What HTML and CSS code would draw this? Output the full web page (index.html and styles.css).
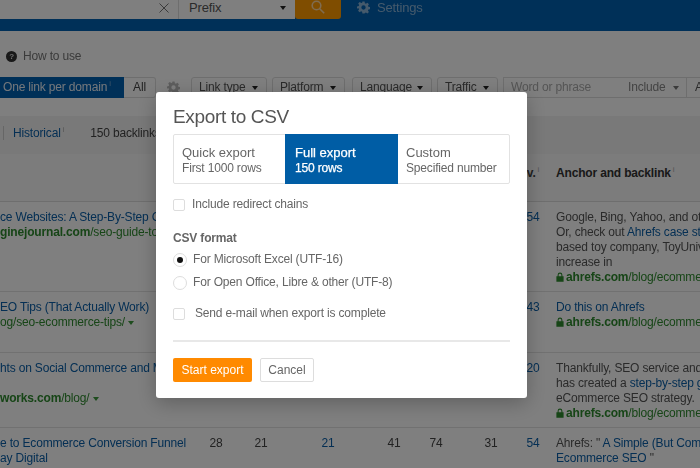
FILE: index.html
```html
<!DOCTYPE html>
<html lang="en">
<head>
<meta charset="utf-8">
<title>Export to CSV</title>
<link rel="stylesheet" href="styles.css">
</head>
<body>
<svg class="defs" width="0" height="0" aria-hidden="true">
  <defs>
    <symbol id="gear" viewBox="0 0 24 24"><path fill-rule="evenodd" d="M10 1h4l.6 3.200 1.900.8 2.700-1.800 2.800 2.800-1.800 2.700.8 1.900 3.200.6v4l-3.200.6-.8 1.900 1.800 2.700-2.800 2.800-2.700-1.800-1.900.8L14 23h-4l-.6-3.200-1.900-.8-2.700 1.800-2.800-2.800 1.800-2.700-.8-1.900L0 14v-4l3.200-.6.8-1.900L2.200 4.800 5 2l2.700 1.800 1.900-.8zM12 8a4 4 0 1 0 0 8 4 4 0 0 0 0-8z"/></symbol>
    <symbol id="lock" viewBox="0 0 10 12"><path fill-rule="evenodd" d="M2 5V3.500a3 3 0 0 1 6 0V5h1.500v7H.5V5zm1.300 0h3.400V3.500a1.700 1.700 0 0 0-3.400 0z"/></symbol>
  </defs>
</svg>

<div class="page">
  <header class="topbar">
    <div class="search">
      <div class="search-input"><svg class="x" viewBox="0 0 10 10"><path d="M.5.5l9 9M9.500.5l-9 9"/></svg></div>
      <div class="search-mode"><span>Prefix</span><i class="caret"></i></div>
      <div class="search-btn"><svg class="glass" viewBox="0 0 14 14"><circle cx="5.500" cy="5.500" r="4.300"/><path d="M8.700 8.700l4.500 4.500"/></svg></div>
    </div>
    <div class="settings"><svg class="gear"><use href="#gear"/></svg><span>Settings</span></div>
  </header>

  <div class="howto"><span class="q">?</span><span>How to use</span></div>

  <div class="filters">
    <div class="seg"><span class="seg-on">One link per domain<sup>i</sup></span><span class="seg-off">All</span></div>
    <svg class="gear filter-gear"><use href="#gear"/></svg>
    <div class="drop w-link">Link type<i class="caret"></i></div>
    <div class="drop w-plat">Platform<i class="caret"></i></div>
    <div class="drop w-lang">Language<i class="caret"></i></div>
    <div class="drop w-traf">Traffic<i class="caret"></i></div>
    <div class="word"><span class="ph">Word or phrase</span><span class="inc">Include<i class="caret pale"></i></span><span class="last">A</span></div>
  </div>

  <div class="tabs">
    <span class="tick"></span>
    <a class="hist">Historical<sup>i</sup></a>
    <span class="count">150 backlinks</span>
  </div>

  <div class="row head">
    <div></div><div></div><div></div><div></div><div></div><div></div><div></div>
    <div class="num">v.<sup>i</sup></div>
    <div class="anchor-h">Anchor and backlink<sup>i</sup></div>
  </div>

  <div class="row">
    <div class="ref"><a>ce Websites: A Step-By-Step G</a><br><span class="url"><b>ginejournal.com</b>/seo-guide-to-</span></div>
    <div></div><div></div><div></div><div></div><div></div><div></div>
    <div class="num link">54</div>
    <div class="anchor">Google, Bing, Yahoo, and other<br>Or, check out <a>Ahrefs case study</a><br>based toy company, ToyUniverse<br>increase in<br><span class="url"><svg class="lock"><use href="#lock"/></svg><b>ahrefs.com</b>/blog/ecommerce</span></div>
  </div>

  <div class="row r2">
    <div class="ref"><a>EO Tips (That Actually Work)</a><br><span class="url">og/seo-ecommerce-tips/<i class="caret green"></i></span></div>
    <div></div><div></div><div></div><div></div><div></div><div></div>
    <div class="num link">43</div>
    <div class="anchor"><a>Do this on Ahrefs</a><br><span class="url"><svg class="lock"><use href="#lock"/></svg><b>ahrefs.com</b>/blog/ecommerce</span></div>
  </div>

  <div class="row">
    <div class="ref"><a>hts on Social Commerce and M</a><br><br><span class="url"><b>works.com</b>/blog/<i class="caret green"></i></span></div>
    <div></div><div></div><div></div><div></div><div></div><div></div>
    <div class="num link">20</div>
    <div class="anchor">Thankfully, SEO service and<br>has created a <a>step-by-step guide</a><br>eCommerce SEO strategy.<br><span class="url"><svg class="lock"><use href="#lock"/></svg><b>ahrefs.com</b>/blog/ecommerce</span></div>
  </div>

  <div class="row">
    <div class="ref"><a>e to Ecommerce Conversion Funnel</a><br><a>ay Digital</a><br><span class="url">/2019/03/01/how-to-map</span></div>
    <div class="num">28</div><div class="num">21</div><div class="num link">21</div><div class="num">41</div><div class="num">74</div><div class="num">31</div>
    <div class="num link">54</div>
    <div class="anchor">Ahrefs: " <a>A Simple (But Complete</a><br><a>Ecommerce SEO</a> "<br><span class="url"><svg class="lock"><use href="#lock"/></svg><b>ahrefs.com</b>/blog/</span></div>
  </div>
</div>

<div class="scrim">
  <div class="modal">
    <h1>Export to CSV</h1>
    <div class="choice">
      <div class="opt"><strong>Quick export</strong><span>First 1000 rows</span></div>
      <div class="opt on"><strong>Full export</strong><span>150 rows</span></div>
      <div class="opt"><strong>Custom</strong><span>Specified number</span></div>
    </div>
    <label class="check first"><i class="box"></i><span>Include redirect chains</span></label>
    <h2>CSV format</h2>
    <label class="radio"><i class="dot on"></i><span>For Microsoft Excel (UTF-16)</span></label>
    <label class="radio"><i class="dot"></i><span>For Open Office, Libre &amp; other (UTF-8)</span></label>
    <label class="check mail"><i class="box"></i><span>Send e-mail when export is complete</span></label>
    <hr>
    <div class="actions"><button class="start">Start export</button><button class="cancel">Cancel</button></div>
  </div>
</div>
</body>
</html>
```

FILE: styles.css
```css
* { box-sizing: border-box; }
html, body { margin: 0; height: 100%; overflow: hidden; }
body { font: 12px/15px "Liberation Sans", Arial, sans-serif; letter-spacing: -.17px; color: #333; background: #fff; width: 700px; height: 468px; position: relative; filter: blur(0.35px); }
.defs { position: absolute; }
.page { width: 700px; height: 468px; overflow: hidden; }

.caret { display: inline-block; flex: none; width: 0; height: 0; border-left: 3.5px solid transparent; border-right: 3.5px solid transparent; border-top: 4px solid #222; }
.caret.pale { border-top-color: #777; }
.caret.green { border-top-color: #3c9a3c; margin-left: 3px; vertical-align: 1px; }
sup { font-size: 8px; line-height: 0; color: #aaa; font-weight: 400; margin-left: 2px; vertical-align: 5px; }

.topbar { height: 31px; background: #0060b0; display: flex; align-items: flex-start; }
.search { display: flex; height: 19px; }
.search-input { width: 179px; background: #fff; border-right: 1px solid #ddd; display: flex; justify-content: flex-end; align-items: flex-start; padding: 3px 9px 0 0; }
.x { width: 10px; height: 10px; fill: none; stroke: #777; stroke-width: 1; }
.search-mode { width: 116px; background: #fff; display: flex; align-items: flex-start; justify-content: space-between; padding: 0 9px 0 10px; color: #555; font-size: 13px; line-height: 15px; }
.search-mode .caret { margin-top: 6px; }
.search-btn { width: 46px; background: #ff9a00; border-radius: 0 0 3px 3px; display: flex; justify-content: center; align-items: flex-start; }
.glass { width: 14px; height: 14px; fill: none; stroke: #ffd9a0; stroke-width: 1.6; }
.settings { display: flex; align-items: center; gap: 7px; margin-left: 16px; color: #8ab4d8; font-size: 13px; height: 14px; }
.gear { width: 13px; height: 13px; fill: #8ab4d8; display: block; }

.howto { display: flex; align-items: center; gap: 6px; height: 16px; margin: 17px 0 0 6px; color: #777; }
.q { width: 11px; height: 11px; border-radius: 50%; background: #333; color: #ddd; font: bold 8px/11px "Liberation Sans", sans-serif; text-align: center; }

.filters { display: flex; align-items: stretch; height: 21px; margin-top: 13px; }
.seg { display: flex; flex: none; width: 156px; }
.seg-on { width: 124px; background: #0060b0; color: #e6eef6; padding: 3px 0 0 3px; white-space: nowrap; }
.seg-on sup { color: #7aa9cf; }
.seg-off { width: 32px; border: 1px solid #ddd; border-left: 0; border-radius: 0 3px 3px 0; text-align: center; padding-top: 2px; color: #444; }
.filter-gear { width: 13px; height: 13px; fill: #bbb; margin: 4px 11px 0 11px; flex: none; }
.drop { display: flex; flex: none; justify-content: space-between; align-items: center; border: 1px solid #ddd; border-radius: 3px; padding: 0 8px 0 7px; color: #555; margin-right: 5px; }
.w-link { width: 76px; }
.w-plat { width: 73px; margin-right: 7px; }
.w-lang { width: 80px; }
.w-traf { width: 61px; }
.word { flex: 1; min-width: 0; display: flex; align-items: center; border: 1px solid #ddd; border-right: 0; padding-left: 7px; color: #aaa; white-space: nowrap; }
.ph { flex: none; width: 117px; }
.inc { flex: none; width: 59px; height: 19px; display: flex; justify-content: space-between; align-items: center; padding-right: 7px; color: #888; border-right: 1px solid #ddd; }
.last { margin-left: 8px; color: #555; }

.tabs { height: 38px; margin-top: 18px; background: #f3f3f3; display: flex; align-items: center; padding-bottom: 4px; white-space: nowrap; }
.tick { width: 1px; height: 14px; background: #ccc; margin-left: 3px; }
.hist { margin-left: 9px; color: #0a5fa8; }
.count { margin-left: 26px; color: #444; }

.row { display: grid; grid-template-columns: 193px 46px 44px 90px 42px 42px 68px 16px 1fr; border-bottom: 1px solid #e3e3e3; padding: 8px 0 6px; color: #555; white-space: nowrap; overflow: hidden; }
.row.head { height: 48px; background: #f8f8f8; align-items: center; padding: 0 0 9px; border-bottom-color: #ddd; }
.row.r2 { padding-bottom: 22px; }
.num { text-align: center; color: #444; }
.head .num { font-weight: 700; }
.num.link { color: #0a5fa8; }
.ref a, .anchor a { color: #0a5fa8; }
.anchor { padding-left: 15px; }
.anchor-h { font-weight: 700; padding-left: 15px; color: #333; }
.url { color: #2e8b2e; }
.url b { font-weight: 700; }
.lock { width: 8px; height: 10px; fill: #2e8b2e; margin-right: 2px; vertical-align: -1px; }

.scrim { position: absolute; inset: 0; background: rgba(0, 0, 0, .5); }
.modal { position: absolute; left: 156px; top: 92px; width: 371px; height: 306px; background: #fff; border-radius: 3px; padding: 13px 17px 0; box-shadow: 0 5px 20px rgba(0, 0, 0, .25); color: #666; }
h1 { margin: 0; font-size: 19px; line-height: 24px; font-weight: 400; color: #555; letter-spacing: -.35px; }
.choice { display: flex; margin-top: 5px; width: 337px; height: 50px; border: 1px solid #e2e2e2; border-radius: 2px; }
.opt { display: flex; flex-direction: column; justify-content: center; padding: 2px 0 0 8px; margin: -1px 0; white-space: nowrap; flex: 1; }
.opt:nth-child(1) { flex: none; width: 111px; }
.opt:nth-child(2) { flex: none; width: 113px; }
.opt strong { font-size: 13px; font-weight: 400; line-height: 16px; letter-spacing: 0; }
.opt span { line-height: 15px; }
.opt.on { background: #005da5; color: #fff; padding-left: 10px; -webkit-text-stroke: .25px #fff; }
.check, .radio { display: flex; align-items: center; }
.box { width: 12px; height: 12px; border: 1px solid #ddd; border-radius: 2px; flex: none; }
.first { margin-top: 13px; gap: 7px; height: 15px; }
h2 { margin: 19px 0 0; font-size: 12px; line-height: 15px; font-weight: 700; color: #666; }
.radio { gap: 6px; margin-top: 6px; height: 15px; }
.radio + .radio { margin-top: 8px; }
.dot { width: 14px; height: 14px; border-radius: 50%; border: 1px solid #ddd; flex: none; }
.dot.on { display: flex; align-items: center; justify-content: center; }
.dot.on::after { content: ""; width: 6px; height: 6px; border-radius: 50%; background: #111; }
.mail { margin-top: 16px; gap: 10px; height: 15px; }
hr { margin: 19px 0 0; border: 0; height: 2px; background: #e8e8e8; width: 337px; }
.actions { display: flex; gap: 8px; margin-top: 16px; }
button { font: 12px/15px "Liberation Sans", Arial, sans-serif; height: 24px; border-radius: 2px; padding: 0; }
.start { width: 79px; background: #ff8a00; color: #fff; border: 0; }
.cancel { width: 54px; background: #fff; color: #666; border: 1px solid #ddd; }
```
